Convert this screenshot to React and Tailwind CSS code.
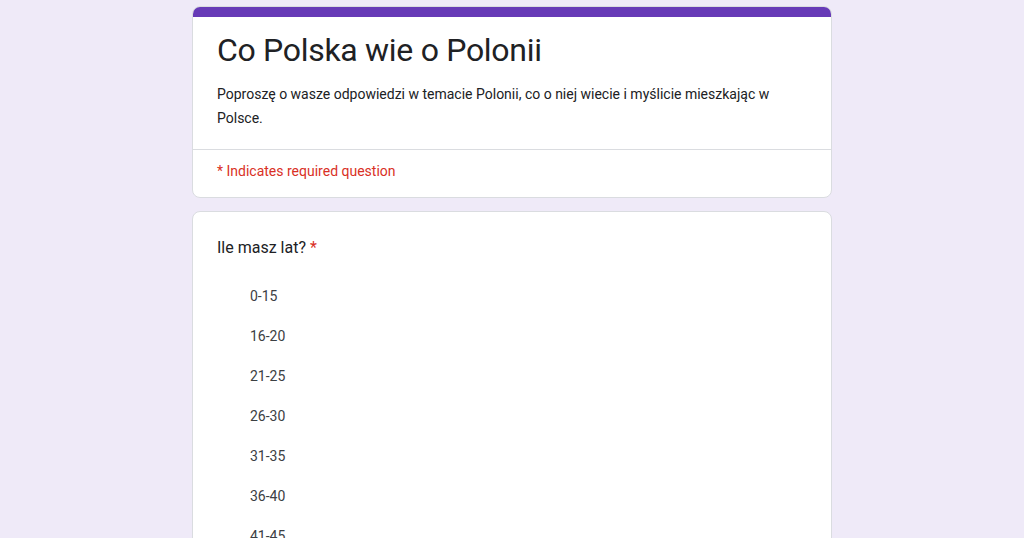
import React from 'react';

const options = ['0-15', '16-20', '21-25', '26-30', '31-35', '36-40', '41-45', '46-50'];

const App = () => {
    return (
        <div className="min-h-screen bg-[#efeaf8] pt-[6px]" style={{ fontFamily: 'Roboto, "Noto Sans", Arial, sans-serif' }}>
            <div className="mx-auto w-[640px] space-y-[13px]">
                {/* Header card */}
                <div className="bg-white rounded-lg border border-[#dadce0] overflow-hidden">
                    <div className="h-[10px] bg-[#673ab7]"></div>
                    <div className="px-6 pt-[13px] pb-[19px]">
                        <h1 className="text-[32px] leading-[40px] tracking-[-0.3px] text-[#202124]">
                            Co Polska wie o Polonii
                        </h1>
                        <p className="mt-[12px] text-sm leading-[24px] text-[#202124] pr-[10px]">
                            Poproszę o wasze odpowiedzi w temacie Polonii, co o niej wiecie i myślicie mieszkając w Polsce.
                        </p>
                    </div>
                    <div className="border-t border-[#dadce0] px-6 pt-[11px] pb-[16px]">
                        <p className="text-sm leading-5 text-[#d93025]">* Indicates required question</p>
                    </div>
                </div>

                {/* Question card */}
                <div className="bg-white rounded-lg border border-[#dadce0] px-6 pt-[24px] pb-6">
                    <p className="text-base leading-6 text-[#202124]">
                        Ile masz lat? <span className="text-[#d93025]">*</span>
                    </p>
                    <div className="mt-4">
                        {options.map((opt) => (
                            <div key={opt} className="h-10 flex items-center pl-[33px]">
                                <span className="text-sm leading-5 text-[#3c4043]">{opt}</span>
                            </div>
                        ))}
                    </div>
                </div>
            </div>
        </div>
    );
};

export default App;
